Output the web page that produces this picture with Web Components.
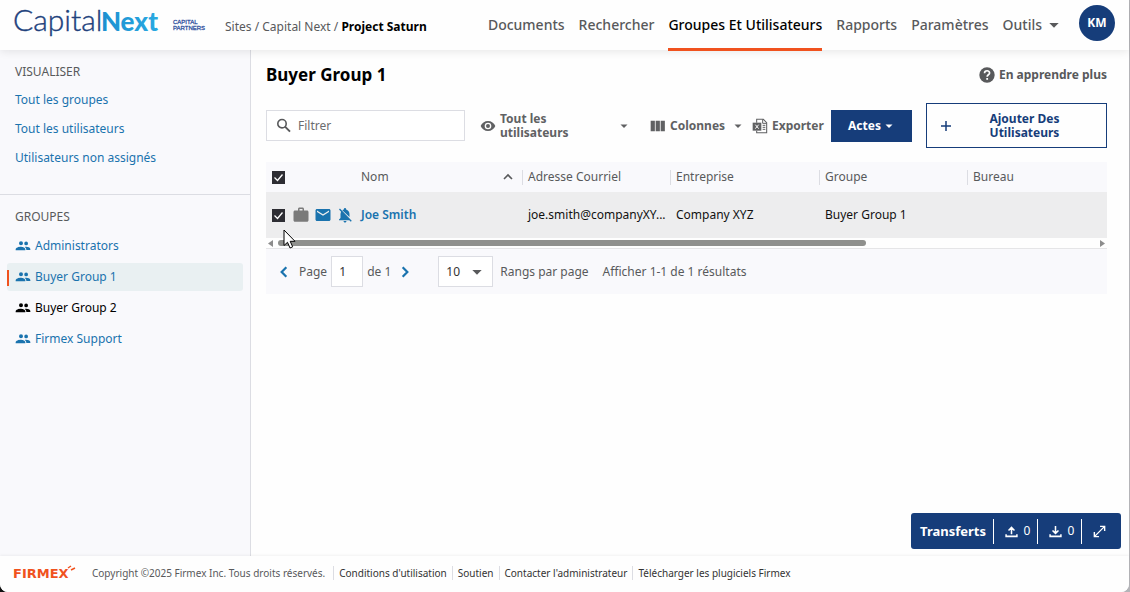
<!DOCTYPE html>
<html lang="fr">
<head>
<meta charset="utf-8">
<meta name="viewport" content="width=device-width, initial-scale=1">
<title>Groupes et utilisateurs – Project Saturn</title>
<style>
html{background:linear-gradient(90deg,#111 50%,#b4b4b8 50%);height:100%}
body{margin:0;min-height:100%;font:12px/18px "Noto Sans",sans-serif;color:#58595b;display:grid}
:root{--navy:#163d7a;--blue:#1a73ae;--orange:#f0521e;--line:#dcdde3;--pale:#f9f9fc}
</style>
</head>
<body>
<app-shell>
  <app-header slot="header"></app-header>
  <side-nav slot="side"></side-nav>
  <users-page></users-page>
  <transfer-bar slot="transfers"></transfer-bar>
  <app-footer slot="footer"></app-footer>
</app-shell>

<script>
const base = `*{box-sizing:border-box}a{color:inherit;text-decoration:none}
button,input,select{font:inherit;color:inherit;margin:0}
button{background:none;border:0;padding:0;cursor:pointer}
svg{display:block}`;

function define(name, css, html, setup) {
  customElements.define(name, class extends HTMLElement {
    constructor() {
      super();
      this.attachShadow({mode: 'open'}).innerHTML = `<style>${base}${css}</style>${html}`;
    }
    connectedCallback() { if (setup) setup(this, this.shadowRoot); }
  });
}

const icons = {
  people: '<path d="M16.7 11a2.8 2.8 0 1 0 0-5.600 2.800 2.800 0 0 0 0 5.600zM9 11a3 3 0 1 0 0-6 3 3 0 0 0 0 6zm7.700 2.200c-.7 0-1.300.1-2 .2 1.700 1.200 2.300 2.700 2.300 4.600h6v-1.600c0-2.100-3.600-3.200-6.300-3.200zM8.500 13C5.800 13 1 14.300 1 17v1.500h14.500V17c0-2.700-4.300-4-7-4z"/>',
  search: '<circle cx="9" cy="8.500" r="6.300" fill="none" stroke="currentColor" stroke-width="2.400"/><path d="M13.500 13l7.500 7.500" fill="none" stroke="currentColor" stroke-width="3"/>',
  eye: '<path d="M12 4.500C7 4.500 2.730 7.610 1 12c1.730 4.390 6 7.500 11 7.500s9.270-3.110 11-7.500c-1.730-4.390-6-7.500-11-7.500zM12 17a5 5 0 1 1 0-10 5 5 0 0 1 0 10zm0-8a3 3 0 1 0 0 6 3 3 0 0 0 0-6z"/>',
  caret: '<path d="M5 9h14l-7 7z"/>',
  columns: '<path d="M1 4h6.300v16H1zM8.500 4h6.300v16H8.500zM16 4h6.300v16H16z"/>',
  excel: '<path d="M7 7V2h10l5 5v15H7v-3" fill="none" stroke="currentColor" stroke-width="1.600"/><path d="M16 2v6h6M16 11h4M16 14h4M16 17h4" fill="none" stroke="currentColor" stroke-width="1.500"/><path d="M1 7h13v12H1z"/><path d="M5 10l5 6M10 10l-5 6" stroke="#fff" stroke-width="1.500"/>',
  help: '<circle cx="12" cy="12" r="11.500"/><path d="M8.300 9.300c0-4.800 7.600-4.800 7.600-.4 0 2.800-3.700 2.700-3.700 5.600" fill="none" stroke="#fff" stroke-width="2.500"/><path d="M10.900 16.500h2.700v2.700h-2.700z" fill="#fff"/>',
  plus: '<path d="M10.500 2h3v8.500H22v3h-8.500V22h-3v-8.500H2v-3h8.500z"/>',
  up: '<path d="M6 15l6-6 6 6" fill="none" stroke="currentColor" stroke-width="2.400"/>',
  left: '<path d="M16 4l-8 8 8 8" fill="none" stroke="currentColor" stroke-width="3.800"/>',
  right: '<path d="M8 4l8 8-8 8" fill="none" stroke="currentColor" stroke-width="3.800"/>',
  bag: '<path d="M20 6h-4V4c0-1.110-.89-2-2-2h-4c-1.110 0-2 .89-2 2v2H4c-1.110 0-2 .89-2 2v11c0 1.110.89 2 2 2h16c1.110 0 2-.89 2-2V8c0-1.110-.89-2-2-2zm-6 0h-4V4h4z"/>',
  mail: '<path d="M20 4H4c-1.100 0-2 .9-2 2v12c0 1.100.9 2 2 2h16c1.100 0 2-.9 2-2V6c0-1.100-.9-2-2-2zm0 4l-8 5-8-5V6l8 5 8-5z"/>',
  belloff: '<path d="M20 18.690L7.840 6.140 5.270 3.490 4 4.760l2.800 2.800v.01c-.52.99-.8 2.160-.8 3.420v5l-2 2v1h13.730l2 2L21 19.720zM12 22c1.110 0 2-.89 2-2h-4c0 1.110.89 2 2 2zm6-7.320V11c0-3.080-1.640-5.640-4.500-6.320V4a1.500 1.500 0 0 0-3 0v.68c-.8.190-1.500.5-2.100.900z"/>',
  upload: '<path d="M2 17v4h20v-4M12 17V5M6.500 10L12 4.500 17.500 10" fill="none" stroke="currentColor" stroke-width="2.800"/>',
  download: '<path d="M2 17v4h20v-4M12 2v12M6.500 10l5.500 5.500L17.500 10" fill="none" stroke="currentColor" stroke-width="2.800"/>',
  expand: '<path d="M13 2.500h8.500V11M21 3L3 21M11 21.500H2.500V13" fill="none" stroke="currentColor" stroke-width="2.600"/>'
};
define('ui-icon', `:host{display:inline-block;flex:none;width:16px;height:16px}svg{width:100%;height:100%;fill:currentColor}`,
  `<svg viewBox="0 0 24 24" aria-hidden="true"></svg>`,
  (el, root) => { root.querySelector('svg').innerHTML = icons[el.getAttribute('name')]; });

define('app-shell', `
:host{display:grid;grid-template:50px 1fr 36px / 251px minmax(0,1fr);min-height:100vh;margin-right:1px;
 background:#fefefe;border-radius:0 0 8px 8px;position:relative}
header{grid-column:1/3;z-index:1;box-shadow:0 2px 8px #00000016;background:#fefefe;display:grid}
aside{background:var(--pale);border-right:1px solid var(--line)}
main{min-width:0}
footer{grid-column:1/3;box-shadow:0 -1px 3px #0000000d;display:grid;align-items:center;padding-bottom:2px;background:#fefefe;border-radius:0 0 8px 8px}
.float{position:absolute;right:8px;bottom:43px}`,
`<header><slot name="header"></slot></header><aside><slot name="side"></slot></aside>
<main><slot></slot></main><footer><slot name="footer"></slot></footer>
<div class="float"><slot name="transfers"></slot></div>`);

define('app-header', `
:host{display:flex;align-items:stretch;padding:0 14px 0 13px;white-space:nowrap}
.brand{display:flex;align-items:center;gap:14px;height:44px}
.brand svg{overflow:visible}
.brand .sub{margin-top:6px}
.crumbs{font-size:12px;margin:2px 0 0 18px;align-self:center}
.crumbs b{color:#000;font-weight:700}
nav{display:flex;gap:14px;margin-left:auto;font-size:14px;line-height:49px;font-weight:500}
nav .on{color:#000;border-bottom:3px solid var(--orange);height:51px}
nav button{display:flex;align-items:center;gap:4px;height:49px;line-height:49px}
.me{width:36px;height:36px;border-radius:50%;background:var(--navy);color:#fff;font-size:12px;font-weight:700;margin:5px 0 0 17px}`,
`<a class="brand" href="#" aria-label="CapitalNext Capital Partners">
<svg width="146" height="30" viewBox="0 0 146 30">
<defs><linearGradient id="g"><stop stop-color="#1c8fd0"/><stop offset="1" stop-color="#29a9e1"/></linearGradient></defs>
<text y="24" font-family="Lato" font-size="30" font-weight="300" fill="#21417c" stroke="#21417c" stroke-width=".4">Capital</text>
<text x="145" y="24" text-anchor="end" font-family="Lato" font-size="26" font-weight="900" fill="url(#g)">Next</text></svg>
<svg class="sub" width="34" height="14" viewBox="0 0 34 14" font-family="Liberation Sans" font-size="6" fill="#33539f" stroke="#33539f" stroke-width=".3">
<text y="6">CAPITAL</text><text y="12">PARTNERS</text></svg></a>
<div class="crumbs"><a href="#">Sites</a> / <a href="#">Capital Next</a> / <b>Project Saturn</b></div>
<nav><a href="#">Documents</a><a href="#">Rechercher</a><a href="#" class="on" aria-current="page">Groupes Et Utilisateurs</a><a href="#">Rapports</a><a href="#">Paramètres</a><button>Outils <ui-icon name="caret"></ui-icon></button></nav>
<button class="me">KM</button>`);

define('side-link', `
:host{display:block;margin:0 7px;font-size:12px;line-height:18px;color:var(--blue)}
a{display:flex;align-items:center;gap:4px;padding:5px 8px}
:host([current]) a{background:#e9f0f2;border-radius:3px;position:relative}
:host([current]) a::before{content:"";position:absolute;left:0;top:7px;width:2px;height:16px;background:var(--orange)}
:host([dark]){color:#000}`,
`<a href="#"><slot name="icon"></slot><slot></slot></a>`);

define('side-nav', `
:host{display:block}
section{padding:13px 0 22px}
section+section{border-top:1px solid var(--line)}
h2{margin:0 15px 5px;font-size:12px;line-height:18px;font-weight:400}
.views{display:grid;gap:1px}
.groups{display:grid;gap:3px;padding-top:1px}`,
`<section><h2>VISUALISER</h2><div class="views"><side-link>Tout les groupes</side-link><side-link>Tout les utilisateurs</side-link><side-link>Utilisateurs non assignés</side-link></div></section>
<section><h2>GROUPES</h2><div class="groups">
<side-link><ui-icon slot="icon" name="people"></ui-icon>Administrators</side-link>
<side-link current><ui-icon slot="icon" name="people"></ui-icon>Buyer Group 1</side-link>
<side-link dark><ui-icon slot="icon" name="people"></ui-icon>Buyer Group 2</side-link>
<side-link><ui-icon slot="icon" name="people"></ui-icon>Firmex Support</side-link></div></section>`);

define('user-toolbar', `
:host{display:grid;grid-template-columns:214px 170px 102px 79px 95px minmax(0,1fr);align-items:center;font-size:12px;font-weight:700;line-height:14px;white-space:nowrap}
label{display:flex;align-items:center;gap:6px;height:31px;border:1px solid var(--line);padding:0 9px;background:#fff;font-weight:400;margin-right:15px}
input{border:0;outline:0;padding:0;width:100%;min-width:0;background:none}
input::placeholder{color:#6b6c6e;opacity:1}
button{display:flex;align-items:center;gap:4px;text-align:left;color:#606163}
.show{margin-right:20px}
.cols{justify-content:space-between;margin-right:8px}
.cols span{flex:1}
.grow{flex:1;white-space:normal}
.s{width:12px;height:12px}
.act{background:var(--navy);color:#fff;height:32px;justify-content:center;gap:2px;margin-right:14px}
.add{border:1px solid var(--navy);color:var(--navy);height:45px;padding:0 13px}
.add span{flex:1;text-align:center;white-space:normal;padding:0 32px}`,
`<label><ui-icon name="search"></ui-icon><input type="text" placeholder="Filtrer" aria-label="Filtrer"></label>
<button class="show"><ui-icon name="eye"></ui-icon><span class="grow">Tout les utilisateurs</span><ui-icon class="s" name="caret"></ui-icon></button>
<button class="cols"><ui-icon name="columns"></ui-icon><span>Colonnes</span><ui-icon class="s" name="caret"></ui-icon></button>
<button><ui-icon name="excel"></ui-icon>Exporter</button>
<button class="act">Actes<ui-icon class="s" name="caret"></ui-icon></button>
<button class="add"><ui-icon class="s" name="plus"></ui-icon><span>Ajouter Des Utilisateurs</span></button>`);

define('user-table', `
:host{display:block;position:relative}
table{width:100%;table-layout:fixed;border-collapse:collapse;font-size:12px}
th{height:30px;background:var(--pale);font-weight:400;text-align:left;padding:0 6px;white-space:nowrap}
th>div{display:flex;justify-content:space-between;align-items:center}
th.sep>div{border-left:1px solid var(--line);margin-left:-6px;padding-left:5px;height:15px}
td{height:46px;background:#ededee;color:#111;padding:0 6px;white-space:nowrap}
td a{color:var(--blue);font-weight:600}
.icons{display:flex;align-items:center;gap:4px;color:var(--blue)}
.icons ui-icon{width:18px;height:18px}
.icons .bag{color:#7a7a7a}
input{appearance:none;flex:none;width:13px;height:13px;margin:0 3px 0 0;background:#2d2d33 url("data:image/svg+xml,%3Csvg xmlns='http://www.w3.org/2000/svg' viewBox='0 0 13 13'%3E%3Cpath d='M2.500 6.500l3 3 5-6' fill='none' stroke='white' stroke-width='1.300'/%3E%3C/svg%3E");display:block}
.pick{padding-right:0}
.bar{height:11px;border-bottom:1px solid #e5e5e7;display:flex;align-items:center;gap:5px;padding:0 2px;color:#8c8c8c}
.track{flex:1}.thumb{width:72%;height:6px;border-radius:3px;background:#8f908d}
.bar svg{width:5px;height:7px;fill:currentColor}
.cursor{position:absolute;left:17px;top:67px;width:13px;height:20px}`,
`<table><colgroup><col style="width:89px"><col style="width:167px"><col style="width:148px"><col style="width:149px"><col style="width:148px"><col></colgroup>
<thead><tr><th><input type="checkbox" checked aria-label="Tout sélectionner"></th><th><div>Nom<ui-icon name="up"></ui-icon></div></th><th class="sep"><div>Adresse Courriel</div></th><th class="sep"><div>Entreprise</div></th><th class="sep"><div>Groupe</div></th><th class="sep"><div>Bureau</div></th></tr></thead>
<tbody><tr><td class="pick"><div class="icons"><input type="checkbox" checked aria-label="Joe Smith"><ui-icon class="bag" name="bag"></ui-icon><ui-icon name="mail"></ui-icon><ui-icon name="belloff"></ui-icon></div></td><td><a href="#">Joe Smith</a></td><td>joe.smith@companyXY...</td><td>Company XYZ</td><td>Buyer Group 1</td><td></td></tr></tbody></table>
<div class="bar"><svg viewBox="0 0 5 7"><path d="M5 0v7L0 3.500z"/></svg><div class="track"><div class="thumb"></div></div><svg viewBox="0 0 5 7"><path d="M0 0v7l5-3.500z"/></svg></div>
<svg class="cursor" viewBox="0 0 13 20"><path d="M1 1v15.500l3.500-3.200 2.500 5.700 2.700-1.200-2.500-5.500H12z" fill="#fff" stroke="#000"/></svg>`);

define('table-pager', `
:host{display:flex;align-items:center;height:45px;background:var(--pale);padding:0 11px;font-size:12px;white-space:nowrap}
button{color:var(--blue);width:14px;display:grid;place-items:center}
button ui-icon{width:14px;height:14px}
label{display:flex;align-items:center;gap:4px;margin-left:8px}
input,select{height:31px;border:1px solid var(--line);background:#fff;border-radius:0;color:#333}
input{width:32px;padding:0 7px}
.of{margin:0 7px 0 4px}
.size{position:relative;display:flex;margin-left:26px}
select{appearance:none;width:55px;padding:0 7px}
.size ui-icon{position:absolute;right:8px;top:8px;pointer-events:none}
.rows{margin:0 14px 0 7px}`,
`<button aria-label="Page précédente"><ui-icon name="left"></ui-icon></button>
<label>Page <input type="text" value="1"></label><span class="of">de 1</span>
<button aria-label="Page suivante"><ui-icon name="right"></ui-icon></button>
<span class="size"><select id="rows"><option>10</option><option>25</option></select><ui-icon name="caret"></ui-icon></span>
<label class="rows" for="rows">Rangs par page</label><span>Afficher 1-1 de 1 résultats</span>`);

define('users-page', `
:host{display:block;padding:14px 22px 0 15px}
.top{display:flex;justify-content:space-between;align-items:center;height:22px}
h1{margin:0;font-size:17px;line-height:22px;font-weight:700;color:#000}
.help{display:flex;align-items:center;gap:4px;font-weight:700}
user-toolbar{margin:17px 0 14px}`,
`<div class="top"><h1>Buyer Group 1</h1><a class="help" href="#"><ui-icon name="help"></ui-icon>En apprendre plus</a></div>
<user-toolbar></user-toolbar><user-table></user-table><table-pager></table-pager>`);

define('transfer-bar', `
:host{display:flex;align-items:center;height:36px;border-radius:3px;background:var(--navy);color:#fff;padding:0 4px 0 9px}
b{font-size:13px;font-weight:700;margin-right:7px}
button{display:flex;align-items:center;justify-content:center;gap:6px;width:44px;height:25px;border-left:1px solid #fff;padding-left:4px}
button:last-child{width:36px;padding:0}
ui-icon{width:13px;height:13px}`,
`<b>Transferts</b><button aria-label="Envois"><ui-icon name="upload"></ui-icon>0</button><button aria-label="Téléchargements"><ui-icon name="download"></ui-icon>0</button><button aria-label="Agrandir"><ui-icon name="expand"></ui-icon></button>`);

define('app-footer', `
:host{display:flex;align-items:center;padding:0 13px;font-size:10px;line-height:14px;white-space:nowrap}
svg{margin-right:16px}
a{border-left:1px solid var(--line);padding:0 5px;color:#333}
span{padding-right:8px}`,
`<svg width="63" height="16" viewBox="0 0 63 16"><text y="13" font-family="DejaVu Sans" font-size="13" font-weight="700" fill="#f0521e">FIRMEX</text><path d="M55 3l3-2M58 5l4-2" stroke="#f0521e" stroke-width="1.500"/></svg>
<span>Copyright ©2025 Firmex Inc. Tous droits réservés.</span><a href="#">Conditions d'utilisation</a><a href="#">Soutien</a><a href="#">Contacter l'administrateur</a><a href="#">Télécharger les plugiciels Firmex</a>`);
</script>
</body>
</html>
